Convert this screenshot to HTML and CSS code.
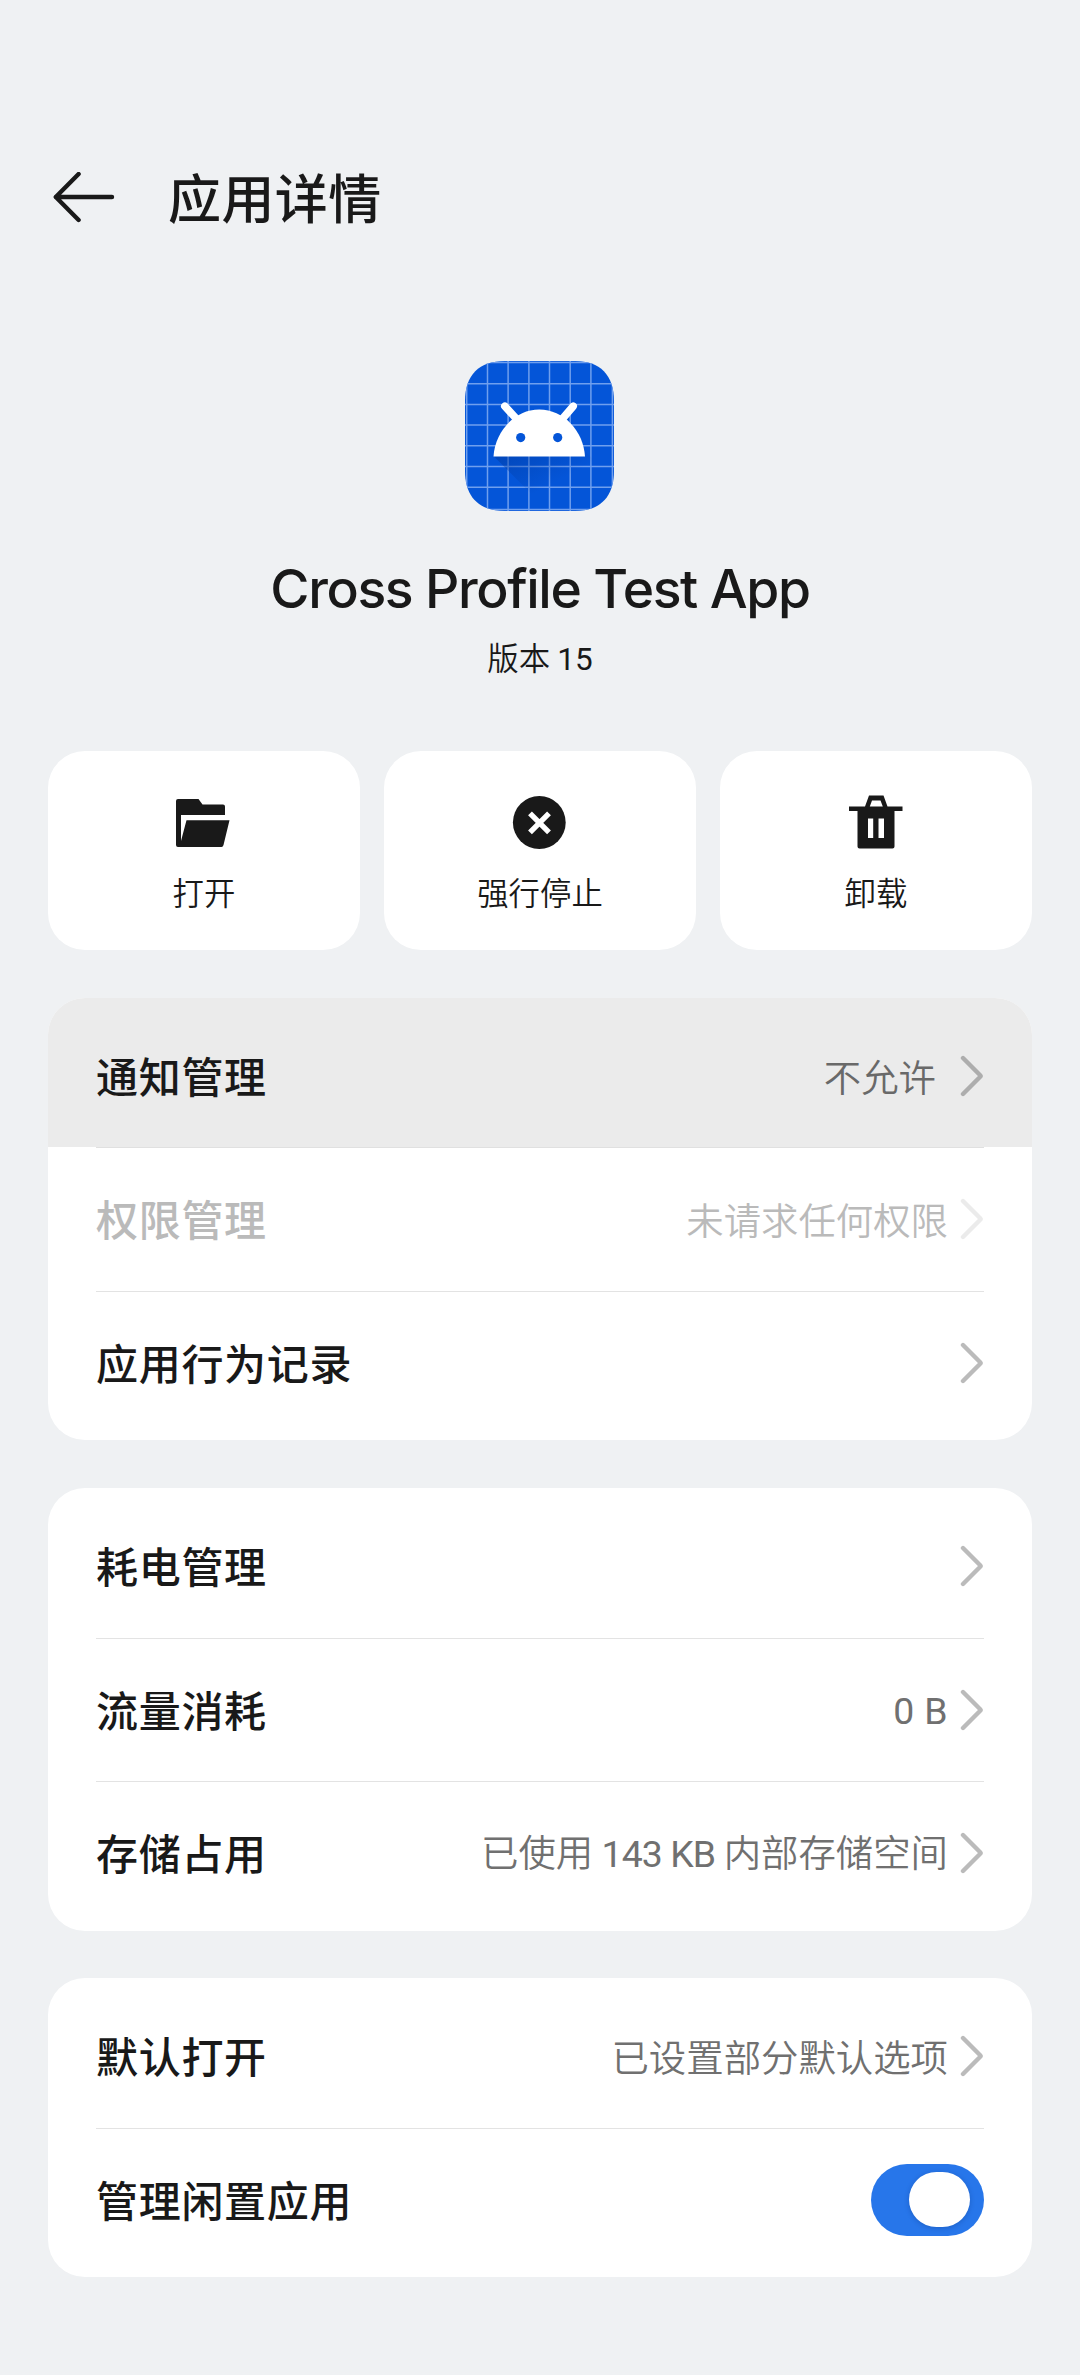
FILE: index.html
```html
<!DOCTYPE html>
<html lang="zh-CN">
<head>
<meta charset="utf-8">
<title>应用详情</title>
<link rel="stylesheet" href="styles.css">
</head>
<body>
<svg class="defs" width="0" height="0" aria-hidden="true">
  <symbol id="chevron" viewBox="0 0 24 42"><path d="M3 3 L20.2 20.2 Q21 21 20.2 21.8 L3 39"/></symbol>
</svg>
<header class="topbar">
  <svg class="back" width="62" height="52" viewBox="0 0 62 52"><path d="M25.6 2 L2.8 25 L25.6 48 M2.8 25 H59"/></svg>
  <h1 class="title">应用详情</h1>
</header>

<section class="app">
  <svg class="app-icon" width="150" height="150" viewBox="0 0 150 150">
    <defs>
      <clipPath id="mask"><path d="M40 0H110C135 0 149 14 149 40V110C149 136 135 150 110 150H40C14 150 0 136 0 110V40C0 14 14 0 40 0Z"/></clipPath>
      <linearGradient id="shade" gradientUnits="userSpaceOnUse" x1="55" y1="85" x2="78" y2="128">
        <stop offset="0" stop-color="#003a9e" stop-opacity=".5"/><stop offset="1" stop-color="#003a9e" stop-opacity="0"/>
      </linearGradient>
    </defs>
    <g clip-path="url(#mask)">
      <rect width="150" height="150" fill="#0455d8"/>
      <path d="M1.7 0V150M22.5 0V150M43.1 0V150M63.9 0V150M84.5 0V150M105.2 0V150M125.9 0V150M147.4 0V150M0 1.5H150M0 22.7H150M0 43.4H150M0 64.1H150M0 84.8H150M0 105.4H150M0 126.2H150M0 148.5H150" stroke="#6f9fee" stroke-width="1.5" fill="none"/>
      <path d="M29 95.5L83.5 150H150V121L118 88Z" fill="url(#shade)"/>
      <path d="M28.5 95.6C30 70 50 48.6 74.3 48.6S118.500 70 120 95.600Z" fill="#fff"/>
      <path d="M39.8 45.200L53 59.500M108.200 45.200L96 59.500" stroke="#fff" stroke-width="7.600" stroke-linecap="round"/>
      <circle cx="55.700" cy="76.600" r="4.600" fill="#0455d8"/><circle cx="92.700" cy="76.600" r="4.600" fill="#0455d8"/>
    </g>
  </svg>
  <h2 class="app-name">Cross Profile Test App</h2>
  <p class="app-version">版本 <span class="latin">15</span></p>
</section>

<nav class="actions">
  <button class="action">
    <svg width="56" height="56" viewBox="0 0 56 56"><path d="M2 4H22.500L26.500 9.500H47Q49 9.500 49 11.500V20H5V46L10.500 25.300H53.500L47.500 50Q47 52 45.500 52H2Q0 52 0 50V6Q0 4 2 4Z"/></svg>
    <span>打开</span>
  </button>
  <button class="action">
    <svg width="56" height="56" viewBox="0 0 56 56"><circle cx="27.300" cy="27.500" r="26.400"/><path class="cross" d="M18 18.300L37 37.300M37 18.300L18 37.300"/></svg>
    <span>强行停止</span>
  </button>
  <button class="action">
    <svg width="56" height="56" viewBox="0 0 56 56"><path fill-rule="evenodd" d="M17 11.500L21 .5H35.500L39.500 11.500H54.500V16H46.500V51.500Q46.500 53.500 44.500 53.500H11.500Q9.500 53.500 9.500 51.500V16H1V11.500ZM21.800 11.500H34.800L32.500 5.500H24ZM20 23.500V43H25.200V23.500ZM30.500 23.500V43H36V23.500Z"/></svg>
    <span>卸载</span>
  </button>
</nav>

<main class="groups">
  <section class="card card-first">
    <div class="row pressed"><span class="label">通知管理</span><span class="value value-inset">不允许</span><svg class="chevron"><use href="#chevron"/></svg></div>
    <div class="row disabled"><span class="label">权限管理</span><span class="value">未请求任何权限</span><svg class="chevron"><use href="#chevron"/></svg></div>
    <div class="row"><span class="label">应用行为记录</span><svg class="chevron"><use href="#chevron"/></svg></div>
  </section>
  <section class="card">
    <div class="row"><span class="label">耗电管理</span><svg class="chevron"><use href="#chevron"/></svg></div>
    <div class="row"><span class="label">流量消耗</span><span class="value"><span class="latin size">0 B</span></span><svg class="chevron"><use href="#chevron"/></svg></div>
    <div class="row"><span class="label">存储占用</span><span class="value">已使用<span class="latin storage"> 143 KB </span>内部存储空间</span><svg class="chevron"><use href="#chevron"/></svg></div>
  </section>
  <section class="card card-last">
    <div class="row"><span class="label">默认打开</span><span class="value">已设置部分默认选项</span><svg class="chevron"><use href="#chevron"/></svg></div>
    <div class="row"><span class="label">管理闲置应用</span><span class="switch"><span class="knob"></span></span></div>
  </section>
</main>
</body>
</html>
```
FILE: styles.css
```css
* { box-sizing: border-box; }
body {
  margin: 0;
  width: 1080px;
  height: 2375px;
  background: #eff1f3;
  color: #191919;
  font-family: "Noto Sans CJK SC", sans-serif;
}
.defs { position: absolute; }
h1, h2, p { margin: 0; font-weight: 500; }

.topbar {
  display: flex;
  align-items: center;
  gap: 53px;
  height: 245px;
  padding: 151px 0 0 53px;
}
.back { fill: none; stroke: #191919; stroke-width: 4.4; stroke-linecap: round; stroke-linejoin: round; }
.title { margin-top: -5px; font-size: 53px; letter-spacing: .4px; line-height: 80px; }

.app {
  display: flex;
  flex-direction: column;
  align-items: center;
  padding-top: 116px;
  height: 506px;
}
.app-name {
  margin-top: 44px;
  font: 500 53.500px/68px Inter, "Noto Sans CJK SC", sans-serif;
  letter-spacing: -1.400px;
}
.app-version { margin-top: 10px; font-size: 31.500px; font-weight: 350; line-height: 46px; }
.latin { font-family: Roboto, sans-serif; font-weight: 400; }

.actions { display: grid; grid-template-columns: repeat(3, 1fr); gap: 24px; padding: 0 48px; }
.action {
  display: flex;
  flex-direction: column;
  align-items: center;
  gap: 19px;
  height: 199px;
  padding: 44px 0 0;
  border: 0;
  border-radius: 37px;
  background: #fff;
  color: #191919;
  font: 350 31.400px/44px "Noto Sans CJK SC", sans-serif;
}
.action svg { fill: #191919; }
.action .cross { stroke: #fff; stroke-width: 5.4; }

.groups { padding: 48px 48px 0; }
.card {
  height: 443px;
  margin-bottom: 47px;
  padding-top: 7px;
  border-radius: 37px;
  background: #fff;
  overflow: hidden;
}
.card-first { height: 442px; margin-bottom: 48px; padding-top: 0; }
.card-last { height: 299px; }
.row {
  display: flex;
  align-items: center;
  height: 143.5px;
  margin: 0 48px;
  border-bottom: 1px solid #e3e3e3;
}
.row:last-child { border-bottom-color: transparent; }
.label { flex: 1; margin-top: -2px; font-size: 42px; font-weight: 500; letter-spacing: .7px; line-height: 62px; }
.value { margin: -1px 12px 0 0; color: #707070; font-size: 37.4px; font-weight: 350; line-height: 56px; white-space: pre; }
.value-inset { margin-right: 24px; }
.size { letter-spacing: .4px; }
.storage { letter-spacing: -.9px; }
.chevron { width: 24px; height: 42px; fill: none; stroke: #bbb; stroke-width: 4.4; stroke-linecap: round; }
.pressed {
  height: 150px;
  margin: 0;
  padding: 6px 48px 0;
  border: 0;
  background:
    linear-gradient(#e0e0e0, #e0e0e0) 48px 149px / 888px 1px no-repeat,
    linear-gradient(#ebebeb, #ebebeb) 0 0 / 100% 149px no-repeat;
}
.pressed .value { color: #696969; }
.pressed .chevron { stroke: #adadad; }
.disabled .label, .disabled .value { color: #bababa; }
.disabled .chevron { stroke: #ebebeb; }
.switch {
  display: flex;
  align-items: center;
  justify-content: flex-end;
  width: 113px;
  height: 72px;
  padding-right: 14px;
  border-radius: 36px;
  background: #2776ea;
}
.knob { width: 61px; height: 55px; border-radius: 27.5px; background: #fff; box-shadow: 0 1px 5px rgba(0, 30, 90, .25); }
```
